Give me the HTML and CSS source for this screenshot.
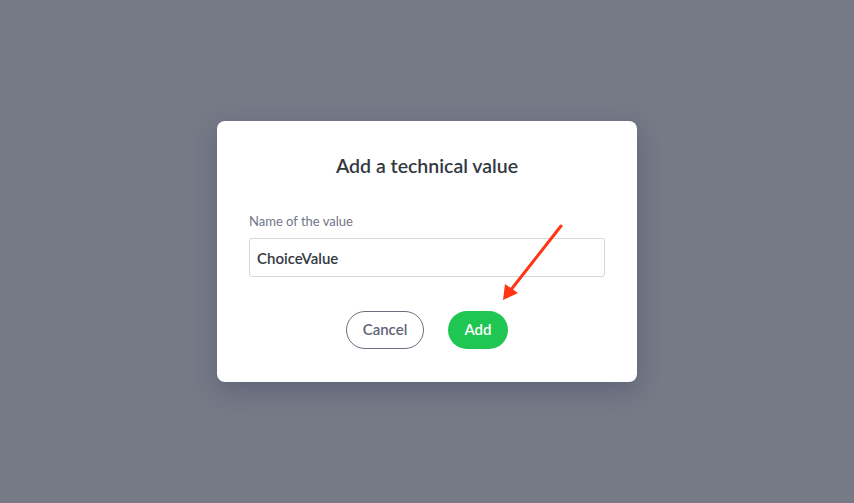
FILE: index.html
```html
<!DOCTYPE html>
<html lang="en">
<head>
<meta charset="utf-8">
<title>Add a technical value</title>
<link rel="stylesheet" href="styles.css">
</head>
<body>
<div class="overlay">
  <div class="modal">
    <h2 class="modal-title">Add a technical value</h2>
    <label class="field-label" for="value-name">Name of the value</label>
    <input class="field-input" id="value-name" type="text" value="ChoiceValue">
    <div class="actions">
      <button class="btn btn-cancel" type="button">Cancel</button>
      <button class="btn btn-add" type="button">Add</button>
    </div>
  </div>
  <svg class="annotation-arrow" width="854" height="503" viewBox="0 0 854 503" xmlns="http://www.w3.org/2000/svg">
    <line x1="561" y1="226" x2="510" y2="291" stroke="#ff3516" stroke-width="3" stroke-linecap="round"/>
    <polygon points="503,300 505,284 518,293" fill="#ff3516"/>
  </svg>
</div>
</body>
</html>
```
FILE: styles.css
```css
* { box-sizing: border-box; }
html, body {
  margin: 0;
  padding: 0;
  width: 854px;
  height: 503px;
  overflow: hidden;
}
body {
  background: #767a87;
  font-family: Lato, "Open Sans", "Liberation Sans", sans-serif;
}
.overlay {
  position: relative;
  width: 854px;
  height: 503px;
  display: flex;
  align-items: center;
  justify-content: center;
}
.modal {
  width: 420px;
  height: 261px;
  background: #ffffff;
  border-radius: 8px;
  padding: 32px 32px 32px;
  display: flex;
  flex-direction: column;
  box-shadow: 0 8px 24px rgba(40, 45, 80, 0.3);
}
.modal-title {
  margin: 0;
  font-size: 19.5px;
  line-height: 26px;
  font-weight: 600;
  color: #33383f;
  text-align: center;
}
.field-label {
  margin-top: 34px;
  font-size: 13px;
  line-height: 16px;
  color: #717587;
}
.field-input {
  margin-top: 9px;
  height: 39px;
  width: 100%;
  border: 1px solid #d4d6e0;
  border-radius: 3px;
  padding: 0 7px;
  font-family: inherit;
  font-size: 15px;
  font-weight: 600;
  color: #33383f;
  outline: none;
}
.actions {
  margin-top: 34px;
  display: flex;
  justify-content: center;
  gap: 24px;
}
.btn {
  height: 38px;
  border-radius: 19px;
  font-family: inherit;
  font-size: 15px;
  font-weight: 600;
  padding: 0 0 2px;
  cursor: pointer;
}
.btn-cancel {
  width: 78px;
  background: #ffffff;
  border: 1px solid #6a6f80;
  color: #5f6478;
}
.btn-add {
  width: 60px;
  background: #1fc752;
  border: none;
  color: #ffffff;
}
.annotation-arrow {
  position: absolute;
  left: 0;
  top: 0;
  pointer-events: none;
}
```
